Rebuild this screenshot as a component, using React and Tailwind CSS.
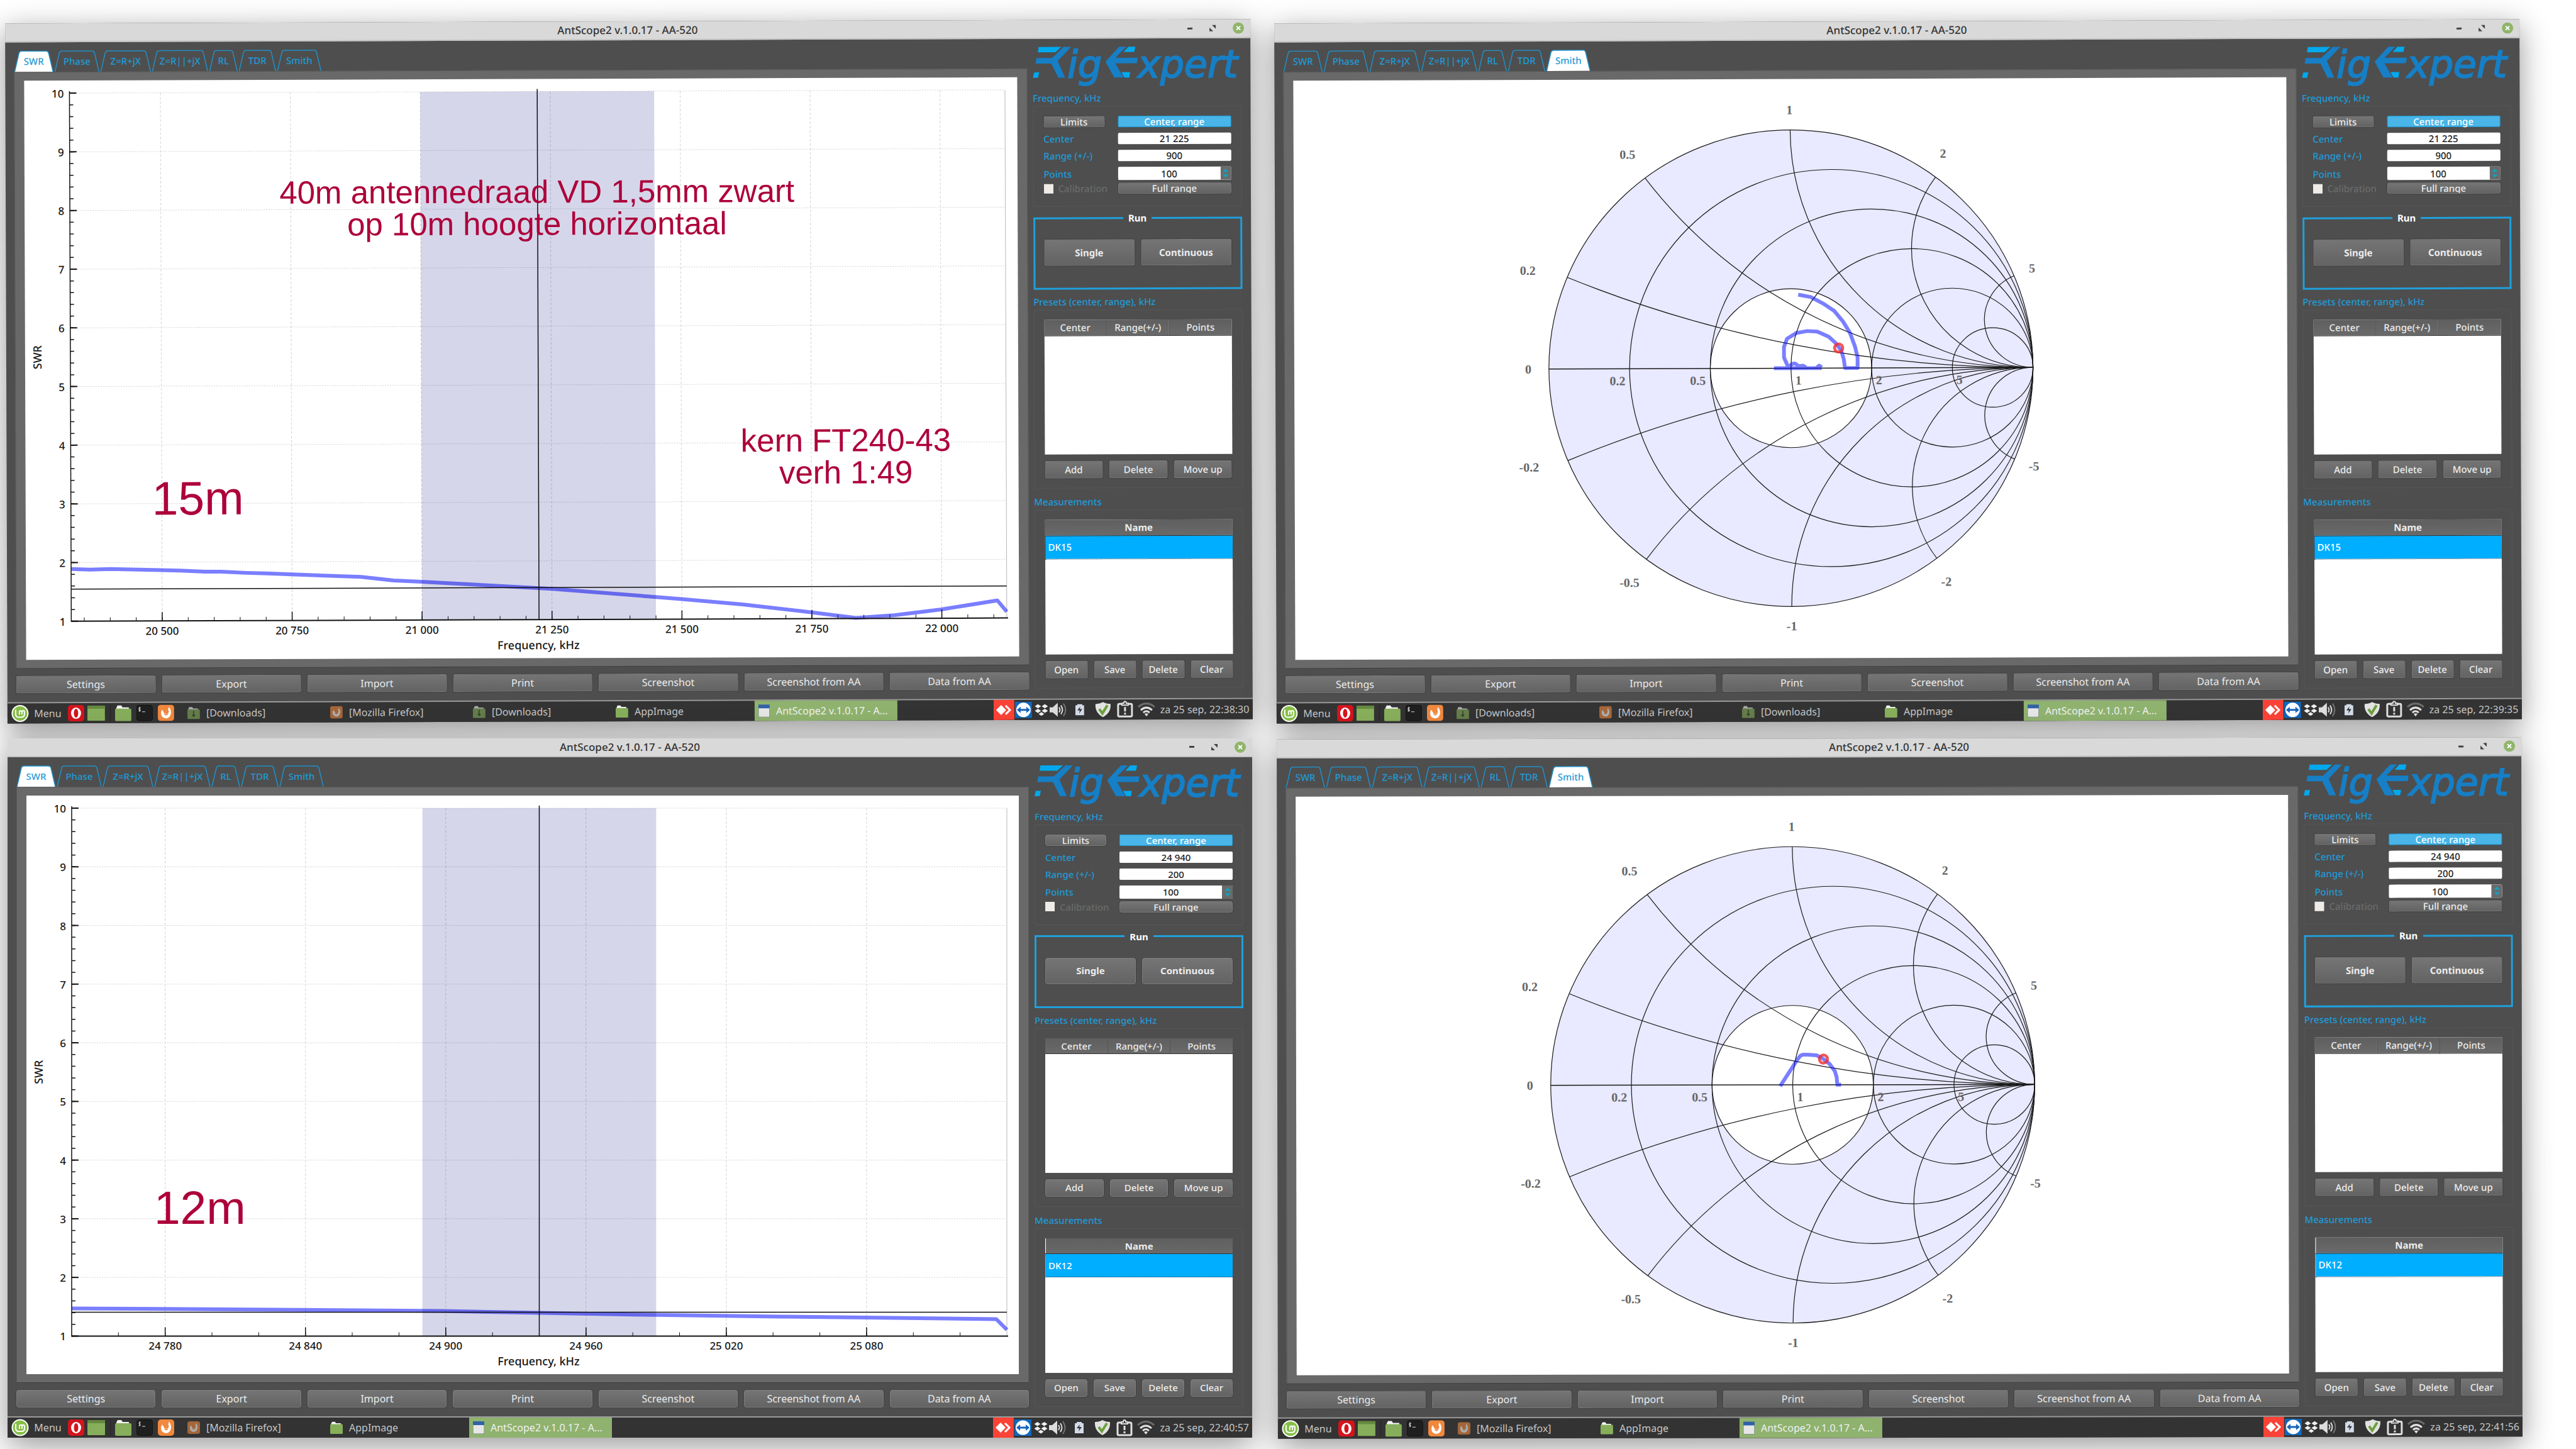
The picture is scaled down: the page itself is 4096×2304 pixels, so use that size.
import React, { useId } from 'react';

const SANS = "font-['Noto_Sans',sans-serif]";

/* ---------- charts ---------- */

const PLOT = { left: 72, right: 1560, top: 20, bottom: 860 };

function SwrChart({ chart }) {
  const { from, to, major, minor, firstMajor, firstMinor, band, marker, cursorY, trace, notes } = chart;
  const px = (f) => PLOT.left + ((f - from) / (to - from)) * (PLOT.right - PLOT.left);
  const py = (v) => PLOT.bottom - ((v - 1) / 9) * (PLOT.bottom - PLOT.top);
  const majors = [];
  for (let f = firstMajor; f < to; f += major) majors.push(f);
  const minors = [];
  for (let f = firstMinor; f < to; f += minor) minors.push(f);
  const levels = [1, 2, 3, 4, 5, 6, 7, 8, 9, 10];
  const fine = Array.from({ length: 45 }, (_, i) => 1 + i * 0.2);
  const label = (f) => `${Math.floor(f / 1000)} ${String(f % 1000).padStart(3, '0')}`;
  return (
    <svg viewBox="0 0 1579 921" className={`block w-full bg-white ${SANS}`} role="img" aria-label="SWR chart">
      <g stroke="#d2d2d2" strokeWidth="1">
        {levels.slice(1).map((v) => (
          <line key={v} x1={PLOT.left} x2={PLOT.right} y1={py(v)} y2={py(v)} strokeDasharray="2 2" />
        ))}
        {majors.map((f) => (
          <line key={f} x1={px(f)} x2={px(f)} y1={PLOT.top} y2={PLOT.bottom} strokeDasharray="4 3" />
        ))}
        <line x1={PLOT.right} x2={PLOT.right} y1={PLOT.top} y2={PLOT.bottom} stroke="#b8b8b8" />
      </g>
      <polyline points={trace} fill="none" stroke="#0008ff" strokeOpacity="0.52" strokeWidth="6" strokeLinejoin="round" />
      <rect x={px(band[0])} y={PLOT.top} width={px(band[1]) - px(band[0])} height={PLOT.bottom - PLOT.top} fill="#00007d" fillOpacity="0.16" />
      <g stroke="#111" strokeWidth="2">
        <line x1={PLOT.left} x2={PLOT.left} y1={PLOT.top - 3} y2={PLOT.bottom + 1} strokeWidth="1.5" />
        <line x1={PLOT.left} x2={PLOT.right + 2} y1={PLOT.bottom} y2={PLOT.bottom} />
        {fine.map((v) => (
          <line key={v} x1={PLOT.left} x2={PLOT.left + 6} y1={py(v)} y2={py(v)} strokeWidth="1.5" />
        ))}
        {levels.map((v) => (
          <line key={v} x1={PLOT.left} x2={PLOT.left + 11} y1={py(v)} y2={py(v)} />
        ))}
        {minors.map((f) => (
          <line key={f} x1={px(f)} x2={px(f)} y1={PLOT.bottom} y2={PLOT.bottom - 6} strokeWidth="1" />
        ))}
        {majors.map((f) => (
          <line key={f} x1={px(f)} x2={px(f)} y1={PLOT.bottom} y2={PLOT.bottom - 14} strokeWidth="1.5" />
        ))}
        <line x1={px(marker)} x2={px(marker)} y1={PLOT.top - 4} y2={PLOT.bottom} strokeWidth="1.5" />
        <line x1={PLOT.left} x2={PLOT.right} y1={cursorY} y2={cursorY} strokeWidth="1.5" />
      </g>
      <g fill="#161616" fontSize="17" fontWeight="500">
        {levels.map((v) => (
          <text key={v} x="63" y={py(v) + 7} textAnchor="end">{v}</text>
        ))}
        {majors.map((f) => (
          <text key={f} x={px(f)} y="882" textAnchor="middle">{label(f)}</text>
        ))}
        <text x="815" y="907" fontSize="18" textAnchor="middle">Frequency, kHz</text>
        <text transform="translate(26 440) rotate(-90)" fontSize="18" textAnchor="middle">SWR</text>
      </g>
      <g fill="#ad003a" textAnchor="middle" className="font-['Liberation_Sans',sans-serif]">
        {notes.map((n) => (
          <text key={n.text} x={n.x} y={n.y} fontSize={n.size}>{n.text}</text>
        ))}
      </g>
    </svg>
  );
}

const SMITH = { cx: 790, cy: 460, rx: 385, ry: 379 };
const SMITH_LABELS = [
  ['1', 789, 49], ['0.5', 531, 119], ['2', 1033, 119], ['0.2', 372, 303], ['5', 1174, 302],
  ['0', 372, 460], ['-0.2', 373, 616], ['-5', 1176, 617], ['-0.5', 532, 800], ['-2', 1036, 800],
  ['-1', 790, 870],
];
const SMITH_AXIS = [['0.2', 514], ['0.5', 642], ['1', 802], ['2', 930], ['5', 1058]];

function SmithChart({ trace, marker }) {
  const { cx, cy, rx, ry } = SMITH;
  const arc = (x, side) => {
    const u = (x * x - 1) / (x * x + 1);
    const v = (2 * x) / (x * x + 1);
    return `M ${cx + rx} ${cy} A ${rx / x} ${ry / x} 0 0 ${side > 0 ? 1 : 0} ${cx + u * rx} ${cy - side * v * ry}`;
  };
  return (
    <svg viewBox="0 0 1579 921" className="block w-full bg-white" role="img" aria-label="Smith chart">
      <ellipse cx={cx} cy={cy} rx={rx} ry={ry} fill="#e9e9ff" />
      <ellipse cx={cx} cy={cy} rx={rx / 3} ry={ry / 3} fill="#ffffff" />
      <g fill="none" stroke="#1a1a1a" strokeWidth="1.2">
        <ellipse cx={cx} cy={cy} rx={rx} ry={ry} />
        <ellipse cx={cx} cy={cy} rx={rx / 3} ry={ry / 3} />
        <line x1={cx - rx} x2={cx + rx} y1={cy} y2={cy} strokeWidth="1.5" />
        {[0.2, 0.5, 1, 2, 5].map((r) => (
          <ellipse key={r} cx={cx + (rx * r) / (1 + r)} cy={cy} rx={rx / (1 + r)} ry={ry / (1 + r)} />
        ))}
        {[0.2, 0.5, 1, 2, 5].map((x) => (
          <path key={x} d={`${arc(x, 1)} ${arc(x, -1)}`} />
        ))}
      </g>
      <g fill="#666" fontSize="20" fontWeight="700" textAnchor="middle" className="font-['Liberation_Serif',serif]">
        {SMITH_LABELS.map(([t, x, y]) => (
          <text key={t} x={x} y={y + 7}>{t}</text>
        ))}
        {SMITH_AXIS.map(([t, x]) => (
          <text key={t} x={x} y="486">{t}</text>
        ))}
      </g>
      <path d={trace} fill="none" stroke="#0008ff" strokeOpacity="0.52" strokeWidth="6" strokeLinejoin="round" />
      <circle cx={marker[0]} cy={marker[1]} r="6.5" fill="none" stroke="#f52a2a" strokeOpacity="0.8" strokeWidth="4.5" />
    </svg>
  );
}

/* ---------- logo and icons ---------- */

function Logo() {
  return (
    <svg viewBox="0 0 332 66" className="block h-[66px] w-full overflow-visible" role="img" aria-label="RigExpert">
      <g fill="#167fc6">
        <path d="M49 1H61L39.500 23.400 51.200 50H40.500L29.300 27.400H4.300L5.900 18.600H30.700Z" />
        <path d="M137.300 1H148.500L131.200 18.600H166.700L165.300 27.400H131.200L144 50H129.300L115.500 24.600Z" />
      </g>
      <g fill="#00a9ee">
        <path d="M9.300 1H45.300L36 9.400H8Z" />
        <path d="M1.900 41.400H10.100L8 50H0Z" />
        <path d="M152 1H163.200L161.300 9.400H144.500Z" />
        <path d="M140.800 41.400H154.700L153.300 50H145.300Z" />
      </g>
      <g fill="#167fc6" stroke="#167fc6" strokeWidth="2" fontSize="60" fontStyle="italic" className="font-['DejaVu_Sans',sans-serif]">
        <text x="55" y="50">ig</text>
        <text x="167" y="50">xpert</text>
      </g>
    </svg>
  );
}

function FirefoxIcon({ className }) {
  return (
    <svg viewBox="0 0 26 26" className={className} aria-hidden="true">
      <rect width="26" height="26" rx="5" fill="#f0883e" />
      <path d="M17 3c1 2 0 4-1 5 2 1 2 4 0 6-2 1-5 1-6-1l-3-5c-3 4-2 10 1 12 4 3 10 2 12-3 2-5 1-10-3-14z" fill="#fff" />
      <path d="M9 13c2 3 6 3 8 0-1 5-6 6-8 0z" fill="#f0883e" />
    </svg>
  );
}

function FolderIcon({ className, arrow }) {
  return (
    <svg viewBox="0 0 26 26" className={className} aria-hidden="true">
      <path d="M2 5 4 1h6l2 3h10v4H2z" fill="#f4f4f4" />
      <rect x="0" y="6" width="26" height="20" rx="2" fill="#87ae5b" />
      {arrow && <path d="M12 9h2v8h3l-4 5-4-5h3z" fill="#2f4a1c" />}
    </svg>
  );
}

function AppWindowIcon() {
  return (
    <svg viewBox="0 0 18 20" className="h-[20px] w-[18px] shrink-0" aria-hidden="true">
      <rect width="18" height="20" rx="1" fill="#e6e6e6" stroke="#5b6a7c" />
      <rect width="18" height="6" rx="1" fill="#2f62a6" />
    </svg>
  );
}

function Launchers() {
  const launch = 'block h-[26px] w-[26px]';
  return (
    <div className="flex items-center">
      <button className="flex items-center gap-[8px] pl-[6px]">
        <svg viewBox="0 0 28 28" className="h-[28px] w-[28px]" aria-hidden="true">
          <circle cx="14" cy="14" r="13.500" fill="#fff" />
          <circle cx="14" cy="14" r="11.500" fill="#86bf47" />
          <path d="M7 8v7c0 3 2 5 5 5h4c3 0 5-2 5-5v-3c0-3-4-3-4 0v4m0-4c0-3-4-3-4 0v4" fill="none" stroke="#fff" strokeWidth="2" />
        </svg>
        <span className="w-[44px]">Menu</span>
      </button>
      <button aria-label="Opera" className="ml-[10px]">
        <svg viewBox="0 0 26 26" className={launch}>
          <rect width="26" height="26" rx="5" fill="#d3141d" />
          <ellipse cx="13" cy="13" rx="8" ry="9" fill="#fff" />
          <ellipse cx="13" cy="13" rx="3.500" ry="7" fill="#d3141d" />
        </svg>
      </button>
      <button aria-label="Show desktop" className="ml-[5px]">
        <svg viewBox="0 0 28 24" className="block h-[24px] w-[28px]">
          <rect width="28" height="24" rx="1" fill="#87ae5b" />
          <rect width="28" height="5" rx="1" fill="#658a3f" />
        </svg>
      </button>
      <span className="ml-[8px] h-[26px] w-px bg-[#262626]" />
      <button aria-label="Files" className="ml-[7px]"><FolderIcon className={launch} /></button>
      <button aria-label="Terminal" className="ml-[8px]">
        <svg viewBox="0 0 26 26" className={launch}>
          <rect x="0.500" y="0.500" width="25" height="25" rx="4" fill="#1f1f1f" stroke="#111" />
          <path d="M7 5c-3-1-4 2-2 2.500s2 3-1.500 2M5 3v8M9 11h5" stroke="#ddd" fill="none" />
        </svg>
      </button>
      <button aria-label="Firefox" className="ml-[8px]"><FirefoxIcon className={launch} /></button>
    </div>
  );
}

function Tray({ clock }) {
  return (
    <div className="ml-auto flex h-full items-center pr-[5px]">
      <svg viewBox="0 0 33 32" className="h-full w-[33px]" aria-hidden="true">
        <rect width="33" height="32" fill="#fb4236" />
        <path d="M4 16l8-8 8 8-8 8z" fill="#fff" />
        <path d="M19 9l7 7-7 7" fill="none" stroke="#fff" strokeWidth="3" />
      </svg>
      <svg viewBox="0 0 27 26" className="ml-px h-[26px] w-[27px]" aria-hidden="true">
        <rect width="27" height="26" fill="#0f68c0" />
        <circle cx="13.500" cy="13" r="11.500" fill="#fff" />
        <path d="M3 13l6-5v3.500h9V8l6 5-6 5v-3.500H9V18z" fill="#1665bd" />
      </svg>
      <svg viewBox="0 0 22 20" className="ml-[4px] h-[20px] w-[22px]" fill="#f0f0f0" aria-hidden="true">
        <path d="M5.500 1l5 3.300-5 3.300-5-3.300zM16.500 1l5 3.300-5 3.300-5-3.300zM5.500 8.300l5 3.300-5 3.300-5-3.300zM16.500 8.300l5 3.300-5 3.300-5-3.300zM11 13.500l4.500 3L11 19.500l-4.500-3z" />
      </svg>
      <svg viewBox="0 0 28 26" className="ml-[2px] h-[26px] w-[28px]" aria-hidden="true">
        <path d="M0 9h5l8-7v22l-8-7H0z" fill="#dcdcdc" />
        <path d="M15 9q3 4 0 8M18 6q5 7 0 14" fill="none" stroke="#dcdcdc" strokeWidth="2" />
        <path d="M22 3q7 10 0 20" fill="none" stroke="#777" strokeWidth="2" />
      </svg>
      <svg viewBox="0 0 14 18" className="ml-[13px] h-[18px] w-[14px]" aria-hidden="true">
        <path d="M0 2h3V0h8v2h3v16H0z" fill="#d3dbe8" />
        <path d="M8 4l-5 6h4l-1 5 5-7H7z" fill="#333" />
      </svg>
      <svg viewBox="0 0 26 26" className="ml-[17px] h-[26px] w-[26px]" aria-hidden="true">
        <path d="M13 1q5 3 12 3 1 14-12 21Q0 18 1 4q7 0 12-3z" fill="#e2e2e2" />
        <path d="M7 12l5 7L20 6" fill="none" stroke="#6d9f3c" strokeWidth="4" />
      </svg>
      <svg viewBox="0 0 26 27" className="ml-[9px] h-[27px] w-[26px]" fill="none" stroke="#e0e0e0" aria-hidden="true">
        <rect x="2" y="5" width="22" height="20" rx="2" strokeWidth="3" />
        <path d="M8 7V4h3c0-4 4-4 4 0h3v3z" strokeWidth="2" fill="#333" />
        <path d="M13 10v7M13 19v3" strokeWidth="3" />
      </svg>
      <svg viewBox="0 0 28 22" className="ml-[7px] h-[22px] w-[28px]" fill="none" strokeWidth="3" aria-hidden="true">
        <path d="M1 7q13-11 26 0" stroke="#6c6c6c" />
        <path d="M5 12q9-8 18 0M9 16q5-5 10 0" stroke="#e0e0e0" />
        <path d="M14 22l-3-4q3-2 6 0z" fill="#e0e0e0" />
      </svg>
      <time className="ml-[8px]">{clock}</time>
    </div>
  );
}

/* ---------- controls ---------- */

function Button({ className = '', children }) {
  return (
    <button className={`overflow-hidden rounded-[3px] border border-[#7d7d7d] bg-linear-to-b from-[#757575] to-[#636363] text-center whitespace-nowrap text-[#ececec] outline outline-[#434343] ${className}`}>
      {children}
    </button>
  );
}

const TABS = [
  ['SWR', 63], ['Phase', 72], ['Z=R+jX', 81], ['Z=R||+jX', 90], ['RL', 46], ['TDR', 60], ['Smith', 71],
];

function Tabs({ active }) {
  return (
    <nav role="tablist" className="flex gap-px">
      {TABS.map(([name, w]) => {
        const on = name === active;
        return (
          <button key={name} role="tab" aria-selected={on} className="relative h-[34px]" style={{ width: w }}>
            <svg viewBox={`0 0 ${w} 34`} className="absolute inset-0 h-full w-full" aria-hidden="true">
              <path
                d={`M1 34L8 4Q9 1 12 1H${w - 12}Q${w - 9} 1 ${w - 8} 4L${w - 1} 34`}
                fill={on ? '#ffffff' : 'none'}
                stroke="#2090c8"
                strokeWidth="1.5"
              />
            </svg>
            <span className="relative text-[15px] font-medium text-[#1f9bd8]">{name}</span>
          </button>
        );
      })}
    </nav>
  );
}

function GroupTitle({ className, children }) {
  return <h2 className={`mb-[3px] text-[15px] leading-[20px] font-medium text-[#1f9bd8] ${className}`}>{children}</h2>;
}

const GROUP = 'rounded-[3px] border border-[#575757] px-[16px] text-[15px] font-medium';
const FIELD = 'h-[18px] w-full min-w-0 rounded-[2px] bg-white text-center text-[15px] leading-[18px] text-[#222]';
const ROW = 'grid grid-cols-[97px_180px] items-center justify-between';
const LABEL = 'text-[#1f9bd8] leading-[18px]';

function FrequencyGroup({ center, range }) {
  const id = useId();
  return (
    <section className={`${GROUP} pt-[15px] pb-[19px] leading-[18px]`}>
      <div className={ROW}>
        <Button className="h-[18px] leading-[16px]">Limits</Button>
        <button className="h-[18px] rounded-[2px] border border-[#1fa0dc] bg-[#49b5e8] leading-[16px] text-white">Center, range</button>
      </div>
      <div className={`${ROW} mt-[9px]`}>
        <label htmlFor={`${id}c`} className={LABEL}>Center</label>
        <input id={`${id}c`} className={FIELD} defaultValue={center} />
      </div>
      <div className={`${ROW} mt-[9px]`}>
        <label htmlFor={`${id}r`} className={LABEL}>Range (+/-)</label>
        <input id={`${id}r`} className={FIELD} defaultValue={range} />
      </div>
      <div className={`${ROW} mt-[9px]`}>
        <label htmlFor={`${id}p`} className={LABEL}>Points</label>
        <div className="flex h-[21px] overflow-hidden rounded-[2px] bg-white">
          <input id={`${id}p`} className="h-full min-w-0 flex-1 text-center text-[15px] text-[#222]" defaultValue="100" />
          <div className="flex w-[17px] flex-col items-center justify-center gap-[3px] bg-[#6a6a6a]">
            <button aria-label="More points">
              <svg viewBox="0 0 10 6" className="block h-[6px] w-[10px]"><path d="M5 0l5 6H0z" fill="#1a9cb8" /></svg>
            </button>
            <button aria-label="Fewer points">
              <svg viewBox="0 0 10 6" className="block h-[6px] w-[10px]"><path d="M0 0h10L5 6z" fill="#1a9cb8" /></svg>
            </button>
          </div>
        </div>
      </div>
      <div className={`${ROW} mt-[4px]`}>
        <div className="flex items-center gap-[8px]">
          <input id={`${id}k`} type="checkbox" disabled className="h-[15px] w-[15px] shrink-0 appearance-none bg-[#efebe7]" />
          <label htmlFor={`${id}k`} className="text-[#6b6b6b]">Calibration</label>
        </div>
        <Button className="h-[18px] leading-[16px]">Full range</Button>
      </div>
    </section>
  );
}

const HEAD = 'h-[25px] border-b border-[#333] bg-linear-to-b from-[#5f5f5f] to-[#6a6a6a] p-0 text-[#ececec]';

function Sidebar({ center, range, measurement }) {
  return (
    <aside className="flex w-[332px] shrink-0 flex-col pt-[12px]">
      <Logo />
      <GroupTitle className="mt-[6px]">Frequency, kHz</GroupTitle>
      <FrequencyGroup center={center} range={range} />

      <fieldset className="mt-[8px] min-w-0 border-[3px] border-[#1fa0dc] px-[14px] pb-[35px] text-[15px] font-bold">
        <legend className="mx-auto px-[8px] leading-[20px] text-white">Run</legend>
        <div className="grid grid-cols-2 gap-[10px] pt-[24px]">
          <Button className="h-[42px]">Single</Button>
          <Button className="h-[42px]">Continuous</Button>
        </div>
      </fieldset>

      <GroupTitle className="mt-[9px]">Presets (center, range), kHz</GroupTitle>
      <section className={`${GROUP} py-[15px]`}>
        <div className="h-[214px] bg-white">
          <table className="w-full table-fixed border-collapse">
            <thead>
              <tr>
                <th className={`${HEAD} font-medium`}>Center</th>
                <th className={`${HEAD} border-x border-x-[#555] font-medium`}>Range(+/-)</th>
                <th className={`${HEAD} font-medium`}>Points</th>
              </tr>
            </thead>
          </table>
        </div>
        <div className="mt-[10px] grid grid-cols-3 gap-[10px]">
          <Button className="h-[28px]">Add</Button>
          <Button className="h-[28px]">Delete</Button>
          <Button className="h-[28px]">Move up</Button>
        </div>
      </section>

      <GroupTitle className="mt-[11px]">Measurements</GroupTitle>
      <section className={`${GROUP} py-[15px]`}>
        <div className="h-[214px] bg-white">
          <table className="w-full border-collapse">
            <thead>
              <tr><th className={`${HEAD} font-bold`}>Name</th></tr>
            </thead>
            <tbody>
              <tr>
                <td className="h-[37px] border-b border-l border-dotted border-[#345] bg-[#00aeff] py-0 pl-[4px] text-white">{measurement}</td>
              </tr>
            </tbody>
          </table>
        </div>
        <div className="mt-[10px] grid grid-cols-4 gap-[10px]">
          <Button className="h-[28px]">Open</Button>
          <Button className="h-[28px]">Save</Button>
          <Button className="h-[28px]">Delete</Button>
          <Button className="h-[28px]">Clear</Button>
        </div>
      </section>
    </aside>
  );
}

const ACTIONS = ['Settings', 'Export', 'Import', 'Print', 'Screenshot', 'Screenshot from AA', 'Data from AA'];

function TitleBar() {
  return (
    <header className="flex h-[30px] items-center border-b-2 border-[#c4c4c4] bg-[#d9d9d9]">
      <span className="w-[110px]" />
      <h1 className="flex-1 text-center text-[17px] leading-[24px] font-medium text-[#333]">AntScope2 v.1.0.17 - AA-520</h1>
      <div className="flex w-[110px] items-center justify-end gap-[26px] pr-[10px]">
        <button aria-label="Minimize" className="h-[3px] w-[8px] bg-[#444]" />
        <button aria-label="Restore">
          <svg viewBox="0 0 12 12" className="block h-[12px] w-[12px]" fill="#444"><path d="M5 1h6v6zM1 5v6h6z" /></svg>
        </button>
        <button aria-label="Close">
          <svg viewBox="0 0 18 18" className="block h-[18px] w-[18px]">
            <circle cx="9" cy="9" r="9" fill="#8fb56a" />
            <path d="M6 6l6 6M12 6l-6 6" stroke="#fff" strokeWidth="2" />
          </svg>
        </button>
      </div>
    </header>
  );
}

function Task({ kind }) {
  const dim = 'h-[20px] w-[20px] shrink-0 opacity-60';
  const item = 'flex h-full w-[227px] items-center gap-[10px] pl-[6px] whitespace-nowrap';
  if (kind === 'active') {
    return (
      <button className={`${item} bg-[#8fb26e] text-[#f0f0f0]`}>
        <AppWindowIcon />
        AntScope2 v.1.0.17 - A...
      </button>
    );
  }
  if (kind === 'firefox') {
    return <button className={item}><FirefoxIcon className={dim} />[Mozilla Firefox]</button>;
  }
  if (kind === 'downloads') {
    return <button className={item}><FolderIcon className={dim} arrow />[Downloads]</button>;
  }
  return <button className={item}><FolderIcon className="h-[20px] w-[20px] shrink-0" />AppImage</button>;
}

function Desktop({ className, tab, center, range, measurement, tasks, clock, children }) {
  return (
    <article className={`${className} bg-[#4e4e4e] shadow-[0_12px_48px_rgba(0,0,0,0.42)]`}>
      <TitleBar />
      <div className="flex gap-[9px] pr-[14px] pb-[14px] pl-[14px]">
        <main className="min-w-0 flex-1 pt-[13px]">
          <Tabs active={tab} />
          <div className="border border-[#595959] border-b-[#3c3c3c] bg-[#696969] px-[15px] py-[13px]">{children}</div>
          <div className="mt-[11px] grid grid-cols-7 gap-[10px] text-[16px] leading-[24px]">
            {ACTIONS.map((a) => (
              <Button key={a} className="h-[28px]">{a}</Button>
            ))}
          </div>
        </main>
        <Sidebar center={center} range={range} measurement={measurement} />
      </div>
      <footer className="flex h-[34px] items-center border-t-2 border-[#9a9a9a] bg-[#333] text-[16px] leading-[24px] text-[#c6c6c6]">
        <Launchers />
        <div className="ml-[15px] flex h-full">
          {tasks.map((t, i) => (
            <Task key={i} kind={t} />
          ))}
        </div>
        <Tray clock={clock} />
      </footer>
    </article>
  );
}

/* ---------- data ---------- */

const CHART_15M = {
  from: 20325, to: 22125, major: 250, minor: 50, firstMajor: 20500, firstMinor: 20350,
  band: [21000, 21450], marker: 21225, cursorY: 809,
  trace: '72,777 102,778 134,777 245,780 285,782 311,782 350,784 383,785 428,787 533,791 585,797 629,799 836,811 982,823 1042,828 1139,837 1250,850 1320,859 1381,855 1456,846 1545,832 1560,850',
  notes: [
    { text: '40m antennedraad VD 1,5mm zwart', x: 815, y: 197, size: 51 },
    { text: 'op 10m hoogte horizontaal', x: 815, y: 248, size: 51 },
    { text: 'kern FT240-43', x: 1305, y: 594, size: 51 },
    { text: 'verh 1:49', x: 1305, y: 645, size: 51 },
    { text: '15m', x: 274, y: 691, size: 75 },
  ],
};

const CHART_12M = {
  from: 24740, to: 25140, major: 60, minor: 20, firstMajor: 24780, firstMinor: 24760,
  band: [24890, 24990], marker: 24940, cursorY: 822,
  trace: '72,816 250,817 660,820 815,823 981,826 1200,829 1543,833 1560,850',
  notes: [{ text: '12m', x: 276, y: 681, size: 75 }],
};

const TRACE_15M =
  'M802 343L822 347 841 357 859 369 873 386 884 404 892 426 896 443 896 460 876 460 874 446 870 432 861 420 850 410 832 402 816 401 799 404 784 413 779 426 779 443 786 459M763 460H839M787 459Q794 447 802 457L809 456 814 459M831 459L835 456 839 459';
const TRACE_12M = 'M770 462L798 419 802 414 806 412 814 412 828 413 839 419 849 427 857 438 860 448 861 460 867 460';

const TASKS_LONG = ['downloads', 'firefox', 'downloads', 'appimage', 'active'];
const TASKS_SHORT = ['firefox', 'appimage', 'active'];

export default function App() {
  return (
    <div className={`flex min-h-screen flex-col gap-[27px] overflow-hidden bg-white pt-[34px] ${SANS}`}>
      <div className="grid grid-cols-2 gap-[38px] pr-[89px] pl-[10px]">
        <Desktop className="rotate-[-0.2deg]" tab="SWR" center="21 225" range="900" measurement="DK15" tasks={TASKS_LONG} clock="za 25 sep, 22:38:30">
          <SwrChart chart={CHART_15M} />
        </Desktop>
        <Desktop className="rotate-[-0.2deg]" tab="Smith" center="21 225" range="900" measurement="DK15" tasks={TASKS_LONG} clock="za 25 sep, 22:39:35">
          <SmithChart trace={TRACE_15M} marker={[866, 428]} />
        </Desktop>
      </div>
      <div className="grid grid-cols-2 gap-[40px] pr-[86px] pl-[12px]">
        <Desktop className="relative" tab="SWR" center="24 940" range="200" measurement="DK12" tasks={TASKS_SHORT} clock="za 25 sep, 22:40:57">
          <SwrChart chart={CHART_12M} />
        </Desktop>
        <Desktop className="rotate-[-0.1deg]" tab="Smith" center="24 940" range="200" measurement="DK12" tasks={TASKS_SHORT} clock="za 25 sep, 22:41:56">
          <SmithChart trace={TRACE_12M} marker={[839, 419]} />
        </Desktop>
      </div>
    </div>
  );
}
